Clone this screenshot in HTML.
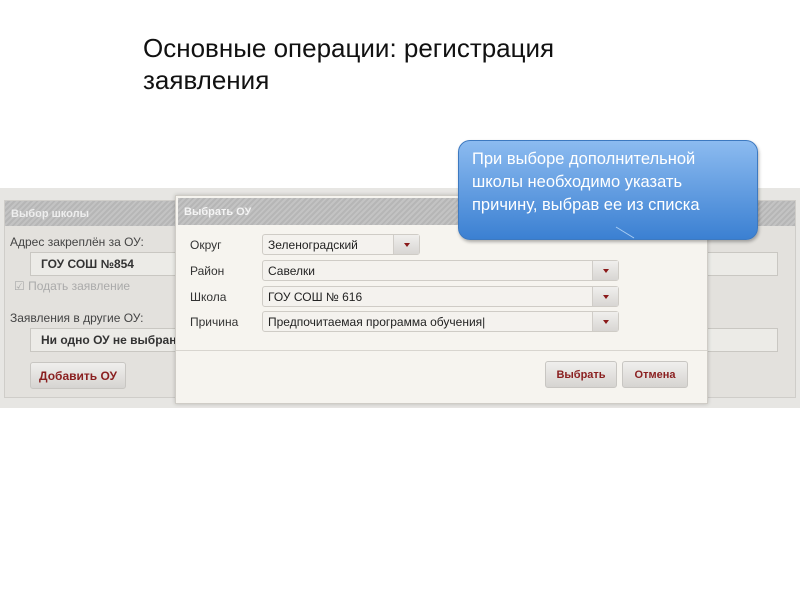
<!DOCTYPE html>
<html><head><meta charset="utf-8"><style>
*{box-sizing:border-box;margin:0;padding:0}
body{width:800px;height:600px;background:#fff;position:relative;overflow:hidden;font-family:"Liberation Sans","DejaVu Sans",sans-serif}
.abs{position:absolute;white-space:nowrap}
.title{left:143px;top:32px;font-size:26px;line-height:32px;color:#111}
.band{left:0;top:188px;width:800px;height:220px;background:#e7e6e3}
.panel{left:4px;top:200px;width:792px;height:198px;background:#e3e1dd;border:1px solid #cfcdc9}
.hdr{background:repeating-linear-gradient(135deg,#c3c3c3 0 2px,#b6b6b6 2px 4px);color:#f4f4f4;font-size:11px;font-weight:bold;padding-left:6px}
.lbl{font-size:12px;color:#444}
.fld{background:#ecebe7;border:1px solid #c9c7c2;font-size:12px;font-weight:bold;color:#333;padding-left:10px;overflow:hidden}
.dlg{left:175px;top:195px;width:533px;height:209px;background:#f6f4ef;border:1px solid #cfccc6;box-shadow:0 0 4px rgba(0,0,0,.2)}
.sel{background:#f4f2ee;border:1px solid #cfccc6;border-radius:3px;font-size:12px;color:#222;padding:3px 0 0 5px;height:21px}
.arr{position:absolute;right:0;top:0;width:26px;height:19px;background:linear-gradient(#f0efed,#d8d6d3);border-left:1px solid #d0cdc8}
.arr:after{content:"";position:absolute;left:10px;top:8px;border:3px solid transparent;border-top:4px solid #8a1a1a}
.btn{background:linear-gradient(#f0efed,#d6d4d1);border:1px solid #c8c6c2;border-radius:3px;color:#8a1f1f;font-size:11px;font-weight:bold;text-align:center}
.call{left:458px;top:140px;width:300px;height:100px;border-radius:12px;background:linear-gradient(#8cbbf0,#3b80d2);border:1px solid #3d79c0;color:#fff;font-size:16.5px;line-height:23px;padding:7px 0 0 13px;box-shadow:1px 2px 3px rgba(0,0,0,.3)}
</style></head><body>
<div class="abs title">Основные операции: регистрация<br>заявления</div>
<div class="abs band"></div>
<div class="abs panel">
 <div class="hdr" style="height:25px;line-height:26px;color:#eee">Выбор школы</div>
</div>
<div class="abs lbl" style="left:10px;top:235px">Адрес закреплён за ОУ:</div>
<div class="abs fld" style="left:30px;top:252px;width:150px;height:24px;line-height:22px">ГОУ СОШ №854</div>
<div class="abs lbl" style="left:14px;top:279px;color:#aaa">☑ Подать заявление</div>
<div class="abs lbl" style="left:10px;top:311px">Заявления в другие ОУ:</div>
<div class="abs fld" style="left:30px;top:328px;width:150px;height:24px;line-height:22px">Ни одно ОУ не выбрано</div>
<div class="abs btn" style="left:30px;top:362px;width:96px;height:27px;line-height:26px;font-size:12px">Добавить ОУ</div>
<div class="abs fld" style="left:707px;top:252px;width:71px;height:24px"></div>
<div class="abs fld" style="left:707px;top:328px;width:71px;height:24px"></div>
<div class="abs dlg">
 <div class="hdr" style="margin:2px;height:27px;line-height:28px">Выбрать ОУ</div>
</div>
<div class="abs lbl" style="left:190px;top:238px;color:#333">Округ</div>
<div class="abs lbl" style="left:190px;top:264px;color:#333">Район</div>
<div class="abs lbl" style="left:190px;top:290px;color:#333">Школа</div>
<div class="abs lbl" style="left:190px;top:315px;color:#333">Причина</div>
<div class="abs sel" style="left:262px;top:234px;width:158px">Зеленоградский<div class="arr"></div></div>
<div class="abs sel" style="left:262px;top:260px;width:357px">Савелки<div class="arr"></div></div>
<div class="abs sel" style="left:262px;top:286px;width:357px">ГОУ СОШ № 616<div class="arr"></div></div>
<div class="abs sel" style="left:262px;top:311px;width:357px">Предпочитаемая программа обучения|<div class="arr"></div></div>
<div class="abs" style="left:176px;top:350px;width:531px;height:1px;background:#d8d5cf"></div>
<div class="abs btn" style="left:545px;top:361px;width:72px;height:27px;line-height:26px">Выбрать</div>
<div class="abs btn" style="left:622px;top:361px;width:66px;height:27px;line-height:26px">Отмена</div>
<div class="abs call">При выборе дополнительной<br>школы необходимо указать<br>причину, выбрав ее из списка</div>
<svg class="abs" style="left:612px;top:226px" width="30" height="14"><polyline points="4,1 22,12" stroke="#a9cdf3" stroke-width="1" fill="none"/></svg>
</body></html>
